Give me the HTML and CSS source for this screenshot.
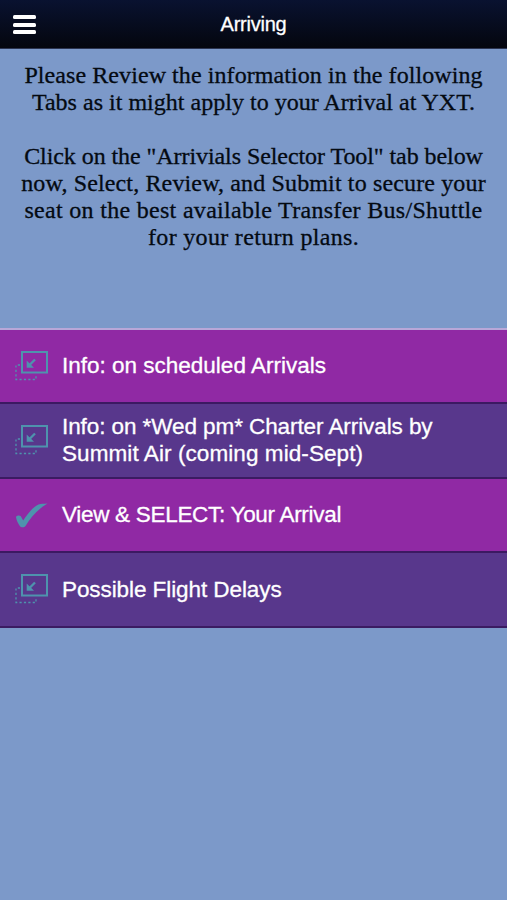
FILE: index.html
```html
<!DOCTYPE html>
<html lang="en">
<head>
<meta charset="utf-8">
<title>Arriving</title>
<link rel="stylesheet" href="styles.css">
</head>
<body>
<svg class="defs" width="0" height="0" aria-hidden="true">
  <symbol id="window" viewBox="0 0 34 32">
    <rect x="7" y="2" width="25" height="20.5" fill="none" stroke="currentColor" stroke-width="2"/>
    <path d="M20 9.500L14 15.500" fill="none" stroke="currentColor" stroke-width="2.300"/>
    <path d="M11.700 10.500V17.800H19Z" fill="currentColor"/>
    <path d="M5 15H1V29.500H21V24" fill="none" stroke="currentColor" stroke-width="1.300" stroke-dasharray="2.200 2.200"/>
  </symbol>
  <symbol id="check" viewBox="0 0 34 32">
    <path d="M1 18C1.500 16.300 4.800 16 5.800 17.300L8.200 21.500C13.500 13.500 18.500 7.500 23.500 5.500C26 4.500 29 4.800 32.500 4.500C23.500 9.500 16 18 10.500 27C9.500 28.700 6 28.700 5 27.200C3 24.500 1.300 21 1 18Z" fill="currentColor"/>
  </symbol>
</svg>
<header class="bar">
  <button class="menu" aria-label="Menu"><span></span><span></span><span></span></button>
  <h1>Arriving</h1>
</header>
<main>
  <section class="intro">
    <p><span class="l1">Please Review the information in the following</span>
    <span class="l2">Tabs as it might apply to your Arrival at YXT.</span></p>
    <p><span class="l3">Click on the "Arrivials Selector Tool" tab below</span>
    <span class="l4">now, Select, Review, and Submit to secure your</span>
    <span class="l5">seat on the best available Transfer Bus/Shuttle</span>
    <span class="l6">for your return plans.</span></p>
  </section>
  <nav class="tabs">
    <a class="tab"><svg class="icon"><use href="#window"/></svg><span class="label">Info: on scheduled Arrivals</span></a>
    <a class="tab"><svg class="icon"><use href="#window"/></svg><span class="label"><span class="snug">Info: on *Wed pm* Charter Arrivals by</span><br><span class="wide">Summit Air (coming mid-Sept)</span></span></a>
    <a class="tab"><svg class="icon"><use href="#check"/></svg><span class="label tight">View &amp; SELECT: Your Arrival</span></a>
    <a class="tab"><svg class="icon"><use href="#window"/></svg><span class="label snug">Possible Flight Delays</span></a>
  </nav>
</main>
</body>
</html>
```
FILE: styles.css
```css
* { box-sizing: border-box; }
body {
  margin: 0;
  min-height: 900px;
  background: #7c99c9;
  font-family: "Liberation Sans", Arial, sans-serif;
}
.defs { display: block; }
.bar {
  display: grid;
  grid-template-columns: 50px 1fr 50px;
  align-items: center;
  height: 49px;
  background: linear-gradient(#091230, #04060e);
  border-bottom: 1px solid #2b3450;
}
.menu {
  display: flex;
  flex-direction: column;
  gap: 3.500px;
  width: 23px;
  margin: 1px 0 0 13px;
  padding: 0;
  border: 0;
  background: none;
}
.menu span { height: 4px; border-radius: 1.500px; background: #fff; }
h1 {
  margin: 0;
  color: #fff;
  font-size: 20px;
  font-weight: 400;
  line-height: 24px;
  text-align: center;
  letter-spacing: -0.25px;
  -webkit-text-stroke: 0.3px #fff;
}
.intro {
  height: 278.5px;
  padding-top: 13px;
  color: #040a12;
  font-family: "Liberation Serif", serif;
  font-size: 24px;
  line-height: 27px;
  text-align: center;
  white-space: nowrap;
  -webkit-text-stroke: 0.3px #040a12;
}
.intro p { margin: 0 0 27px; }
.intro span { display: block; }
.l1 { letter-spacing: 0.08px; }
.l2 { letter-spacing: 0.02px; }
.l3 { letter-spacing: -0.07px; }
.l4 { letter-spacing: 0.14px; }
.l5 { letter-spacing: 0.3px; }
.l6 { letter-spacing: 0.32px; }
.tabs { border-top: 2px solid #b9a7d8; }
.tab {
  display: flex;
  align-items: center;
  height: 74.5px;
  padding-left: 15px;
  background: #9029a4;
  border-bottom: 2px solid #3c1962;
  color: #fff;
}
.tab:nth-child(even) { background: #58378c; border-bottom-color: #3b1b62; }
.icon { flex: none; width: 34px; height: 32px; margin-right: 13px; color: #4e93ad; }
.label {
  font-size: 22.5px;
  line-height: 27px;
  white-space: nowrap;
  -webkit-text-stroke: 0.3px #fff;
}
.snug { letter-spacing: -0.08px; }
.wide { letter-spacing: 0.08px; }
.tight { letter-spacing: -0.3px; }
```
